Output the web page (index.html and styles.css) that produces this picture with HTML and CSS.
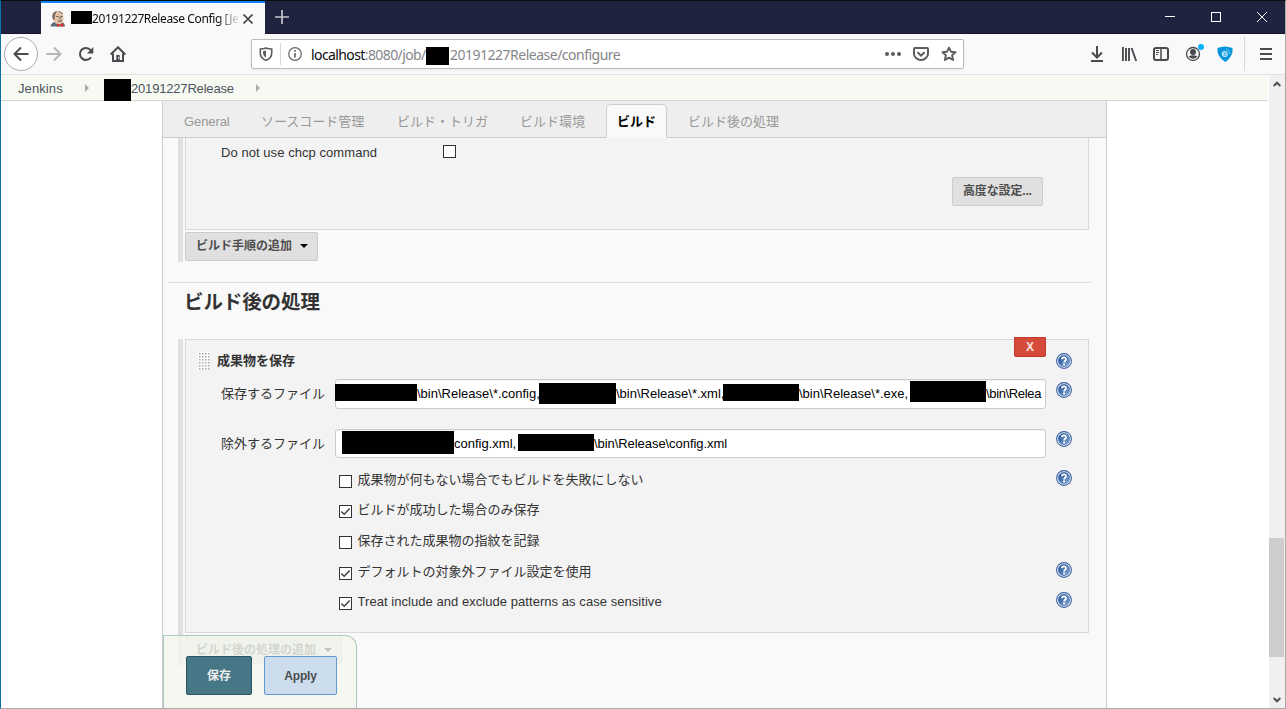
FILE: index.html
```html
<!DOCTYPE html>
<html lang="ja">
<head>
<meta charset="utf-8">
<title>20191227Release Config [Jenkins]</title>
<link rel="stylesheet" href="styles.css">
</head>
<body>
<svg class="defs" width="0" height="0">
  <defs>
    <linearGradient id="blue" x1="0" y1="0" x2="1" y2="1"><stop offset="0" stop-color="#174a91"/><stop offset="1" stop-color="#8badd8"/></linearGradient>
    <symbol id="help" viewBox="0 0 16 16">
      <circle cx="8" cy="8" r="7.400" fill="#fff" stroke="#365f9f" stroke-width="1.100"/>
      <circle cx="8" cy="8" r="5.700" fill="url(#blue)" stroke="#2f5c9e" stroke-width=".5"/>
      <path d="M5.900 6.200C6 4 10 3.800 10 6.200C10 7.800 8.100 7.600 8.100 9.400" fill="none" stroke="#fff" stroke-width="1.800"/>
      <rect x="7.100" y="10.500" width="2" height="1.900" fill="#fff"/>
    </symbol>
    <pattern id="dots" width="3" height="3" patternUnits="userSpaceOnUse"><rect width="3" height="3" fill="#fbfbfb"/><rect x="1" y="1" width="1.500" height="1.500" fill="#aaa"/></pattern>
  </defs>
</svg>
<div class="window">
  <header class="titlebar">
    <div class="tab">
      <svg class="favicon" width="16" height="18" viewBox="0 0 16 18">
        <path d="M.5 16.500C1 13 4 12 5 12L12 12C14 13 15 14.500 15 16.500Z" fill="#5b6b7c"/>
        <path d="M3 5C4 0 12 0 13 5L13.500 9C13 13 11 14.500 8.500 14.500C6 14.500 4 12 3.500 10Z" fill="#e3c3aa"/>
        <path d="M3.500 10C1 6 2.500 1.500 7.500 1Q4.500 3 4.700 9.500ZM7.500 1Q12 1 13.200 4.500L12 4Q10 1.800 7.500 1Z" fill="#75685f"/>
        <path d="M6.500 6.500h2M10.500 6.500h2M10 7v2.500M8 11q2 .7 4-.3" stroke="#5c4a42" fill="none"/>
        <path d="M7 13.500l3 1 3.500-1.500v4L10 15.700l-3 1.300Z" fill="#d33833"/>
      </svg>
      <span class="mask tab-mask"></span>
      <span class="tab-title">20191227Release Config [Je</span>
      <svg width="12" height="12" viewBox="0 0 12 12"><path d="M1.500 1.500l9 9M10.500 1.500l-9 9" stroke="#3e3e42" stroke-width="1.700"/></svg>
    </div>
    <svg class="plus" width="14" height="14" viewBox="0 0 14 14"><path d="M7 0v14M0 7h14" stroke="#c4c5cd" stroke-width="1.700"/></svg>
    <div class="win-buttons">
      <svg width="10" height="10" viewBox="0 0 10 10"><path d="M0 4.500h10" stroke="#fff"/></svg>
      <svg width="10" height="10" viewBox="0 0 10 10"><rect x=".5" y=".5" width="9" height="9" fill="none" stroke="#fff"/></svg>
      <svg width="10" height="10" viewBox="0 0 10 10"><path d="M0 0l10 10M10 0L0 10" stroke="#fff"/></svg>
    </div>
  </header>
  <nav class="toolbar">
    <div class="nav-left">
      <span class="back"><svg width="16" height="16" viewBox="0 0 16 16"><path d="M15.500 8H1.500M8 1.500L1.500 8L8 14.500" fill="none" stroke="#4a4a4f" stroke-width="2"/></svg></span>
      <svg width="16" height="16" viewBox="0 0 16 16"><path d="M.5 8H14.500M8 1.500L14.500 8L8 14.500" fill="none" stroke="#b5b5b7" stroke-width="2"/></svg>
      <svg width="16" height="16" viewBox="0 0 16 16"><path d="M13 11.200A6 6 0 1 1 12.500 4" fill="none" stroke="#4a4a4f" stroke-width="2"/><path d="M15.300 1v6.500H9Z" fill="#4a4a4f"/></svg>
      <svg width="16" height="16" viewBox="0 0 16 16"><path d="M.7 8.500L8 1.300l7.300 7.200M3 7.500V15h10V7.500" fill="none" stroke="#4a4a4f" stroke-width="2"/><path d="M6.300 9h3.400v6H6.300Z" fill="#4a4a4f"/><rect x="8" y="11" width="1" height="1.500" fill="#fff"/></svg>
    </div>
    <div class="urlbar">
      <svg width="14" height="14" viewBox="0 0 14 14"><path d="M7 1C5 1.800 3 2 1.300 2V6c0 3.800 2.500 6.200 5.700 7.200C10.200 12.200 12.700 9.800 12.700 6V2C11 2 9 1.800 7 1Z" fill="none" stroke="#5c5c60" stroke-width="1.600"/><path d="M7 3.500v7C5.300 9.700 4 8 4 5.800V4.200Z" fill="#5c5c60"/></svg>
      <i class="url-sep"></i>
      <svg class="info" width="14" height="14" viewBox="0 0 14 14"><circle cx="7" cy="7" r="6.300" fill="none" stroke="#68686c" stroke-width="1.200"/><path d="M7 6v4.500M7 3v1.700" stroke="#68686c" stroke-width="1.700"/></svg>
      <span class="url url-a"><b>localhost</b>:8080/job/</span><span class="mask url-mask"></span><span class="url url-b">20191227Release/configure</span>
      <div class="url-actions">
        <svg width="16" height="16" viewBox="0 0 16 16"><g fill="#5c5c60"><circle cx="2" cy="8" r="2"/><circle cx="8" cy="8" r="2"/><circle cx="14" cy="8" r="2"/></g></svg>
        <svg width="16" height="16" viewBox="0 0 16 16"><path d="M2 2h12a1 1 0 0 1 1 1v4.500a7 6.500 0 0 1-14 0V3a1 1 0 0 1 1-1Z" fill="none" stroke="#5c5c60" stroke-width="2"/><path d="M4.500 6.300L8 9.700l3.500-3.400" fill="none" stroke="#5c5c60" stroke-width="2"/></svg>
        <svg width="16" height="16" viewBox="0 0 16 16"><path d="M8 1.700l1.900 4 4.600.5-3.400 3.100 1 4.700L8 11.700 3.900 14l1-4.700L1.500 6.200l4.600-.5Z" fill="none" stroke="#5c5c60" stroke-width="1.900" stroke-linejoin="round"/></svg>
      </div>
    </div>
    <div class="nav-right">
      <svg width="16" height="16" viewBox="0 0 16 16"><path d="M8 0v11M3 6.500l5 5 5-5M2 15h12" fill="none" stroke="#4a4a4f" stroke-width="2"/></svg>
      <svg width="16" height="16" viewBox="0 0 16 16"><path d="M1.900 1v14M5 2v13M8 2v13M10.500 2l4.700 13" fill="none" stroke="#4a4a4f" stroke-width="1.900"/></svg>
      <svg width="16" height="16" viewBox="0 0 16 16"><rect x="1" y="2" width="14" height="12" rx="2" fill="none" stroke="#4a4a4f" stroke-width="2"/><path d="M8 2v12" stroke="#4a4a4f" stroke-width="1.500"/><path d="M3 4.500h3M3 6.500h3M3 8.500h2" stroke="#4a4a4f"/></svg>
      <svg class="account" width="20" height="22" viewBox="0 0 20 22"><circle cx="8" cy="12" r="6.500" fill="none" stroke="#4a4a4f" stroke-width="1.300"/><circle cx="8" cy="10" r="3" fill="#4a4a4f"/><path d="M3.500 14.500Q8 12 12.500 14.500Q8 19 3.500 14.500Z" fill="#4a4a4f"/><circle cx="16" cy="5" r="3" fill="#00b3f4"/></svg>
      <svg width="16" height="16" viewBox="0 0 16 16"><path d="M.5 2Q8-1 15.500 2V6Q14 12 8.500 16Q2 12 .5 6Z" fill="#0996dc"/><circle cx="7.800" cy="8" r="3" fill="#c9eaff"/><path d="M6.500 7h3M6.500 9h3" stroke="#0996dc"/><path d="M9 3q4 1 4 5" stroke="#70c7f2" fill="none"/></svg>
      <i class="menu-sep"></i>
      <svg width="14" height="16" viewBox="0 0 14 16"><path d="M1 3h12M1 8h12M1 13h12" stroke="#4a4a4f" stroke-width="1.800"/></svg>
    </div>
  </nav>
  <div class="viewport">
    <div class="page">
      <div class="breadcrumbs">
        <span class="crumb-a">Jenkins</span><i class="crumb-arrow"></i><span class="mask crumb-mask"></span><span class="crumb-b">20191227Release</span><i class="crumb-arrow"></i>
      </div>
      <main class="config">
        <div class="config-tabs">
          <span class="ctab general">General</span><span class="ctab scm">ソースコード管理</span><span class="ctab">ビルド・トリガ</span><span class="ctab">ビルド環境</span><span class="ctab active">ビルド</span><span class="ctab">ビルド後の処理</span>
        </div>
        <section class="group build">
          <div class="panel build-panel">
            <div class="chcp"><span class="chcp-label">Do not use chcp command</span><i class="check"></i></div>
            <span class="btn advanced">高度な設定...</span>
          </div>
          <span class="btn add">ビルド手順の追加<i class="caret"></i></span>
        </section>
        <h2 class="heading">ビルド後の処理</h2>
        <section class="group post">
          <div class="panel post-panel">
            <div class="row title-row">
              <svg class="handle" width="12" height="18"><rect width="12" height="18" fill="url(#dots)"/></svg>
              <b class="panel-title">成果物を保存</b>
              <span class="delete">X</span>
              <svg class="help" width="16" height="16"><use href="#help"/></svg>
            </div>
            <div class="row input-row">
              <span class="label">保存するファイル</span>
              <div class="input"><i class="mask m1"></i><span class="w1">\bin\Release\*.config,</span><i class="mask m2"></i><span class="w2">\bin\Release\*.xml,</span><i class="mask m3"></i><span class="w3">\bin\Release\*.exe,</span><i class="mask m4"></i><span class="w4">\bin\Relea</span></div>
              <svg class="help" width="16" height="16"><use href="#help"/></svg>
            </div>
            <div class="row input-row second">
              <span class="label">除外するファイル</span>
              <div class="input"><i class="mask m5"></i><span class="w5">config.xml,</span><i class="mask m6"></i><span class="w6">\bin\Release\config.xml</span></div>
              <svg class="help" width="16" height="16"><use href="#help"/></svg>
            </div>
            <div class="options">
              <div class="row option"><i class="check"></i><span>成果物が何もない場合でもビルドを失敗にしない</span><svg class="help" width="16" height="16"><use href="#help"/></svg></div>
              <div class="row option"><i class="check on"><svg width="11" height="11" viewBox="0 0 11 11"><path d="M1.300 5.500L4.200 8.300L9.700 2.500"/></svg></i><span>ビルドが成功した場合のみ保存</span></div>
              <div class="row option"><i class="check"></i><span>保存された成果物の指紋を記録</span></div>
              <div class="row option"><i class="check on"><svg width="11" height="11" viewBox="0 0 11 11"><path d="M1.300 5.500L4.200 8.300L9.700 2.500"/></svg></i><span>デフォルトの対象外ファイル設定を使用</span><svg class="help" width="16" height="16"><use href="#help"/></svg></div>
              <div class="row option"><i class="check on"><svg width="11" height="11" viewBox="0 0 11 11"><path d="M1.300 5.500L4.200 8.300L9.700 2.500"/></svg></i><span class="treat">Treat include and exclude patterns as case sensitive</span><svg class="help" width="16" height="16"><use href="#help"/></svg></div>
            </div>
          </div>
          <span class="btn add">ビルド後の処理の追加<i class="caret"></i></span>
        </section>
        <div class="savebar"><span class="save">保存</span><span class="apply">Apply</span></div>
      </main>
    </div>
    <div class="scrollbar">
      <svg width="8" height="6" viewBox="0 0 8 6"><path d="M.7 5L4 1.700L7.300 5" fill="none" stroke="#505050" stroke-width="2"/></svg>
      <i class="thumb"></i>
      <svg width="8" height="6" viewBox="0 0 8 6"><path d="M.7 1L4 4.300L7.300 1" fill="none" stroke="#505050" stroke-width="2"/></svg>
    </div>
  </div>
</div>
</body>
</html>
```
FILE: styles.css
```css
* { box-sizing: border-box; }
body { margin: 0; font: 13px/18px "Liberation Sans", "Noto Sans CJK JP", sans-serif; color: #333; overflow: hidden; }
svg { display: block; flex: none; }
i { font-style: normal; }
.defs { position: absolute; }
.mask { background: #000; flex: none; }
.window { width: 1286px; height: 709px; display: flex; flex-direction: column; border: 1px solid; border-color: #090a12 #aaa #aaa #0873a8; }

.titlebar { height: 33px; background: #20233f; display: flex; align-items: center; flex: none; border-bottom: 1px solid #15152d; }
.tab { width: 224px; height: 33px; align-self: flex-start; margin-left: 40px; background: #f9f9fa; border-top: 2px solid #0a84ff; display: flex; align-items: center; padding-left: 9px; font: 12px/16px "Noto Sans", sans-serif; color: #0c0c0d; }
.tab-mask { width: 21px; height: 13px; margin: 0 0 3px 5px; }
.tab-title { width: 147px; margin-right: 3px; padding-top: 1px; white-space: nowrap; overflow: hidden; letter-spacing: -.38px; -webkit-mask-image: linear-gradient(90deg, #000 125px, transparent 149px); mask-image: linear-gradient(90deg, #000 125px, transparent 149px); }
.plus { margin-left: 10px; }
.win-buttons { display: flex; gap: 36px; margin-left: auto; margin-right: 18px; }

.toolbar { height: 41px; flex: none; background: #f9f9fa; border-bottom: 1px solid #e0e0e0; display: flex; align-items: center; }
.nav-left { display: flex; align-items: center; gap: 16px; margin-left: 3px; width: 247px; }
.back { width: 34px; height: 34px; border: 1px solid #aaa; border-radius: 50%; background: #fff; display: grid; place-items: center; margin-right: -8px; }
.urlbar { width: 713px; height: 30px; border: 1px solid #bbb; border-radius: 2px; background: #fff; display: flex; align-items: center; padding-left: 7px; box-shadow: 0 1px 3px rgba(0,0,0,.06); }
.url-sep { width: 1px; height: 22px; background: #d7d7db; margin: 0 7px 0 7px; }
.info { margin-right: 9px; }
.url { font: 14px/18px "Noto Sans", sans-serif; color: #85858a; white-space: nowrap; flex: none; padding-top: 1px; }
.url b { font-weight: 400; color: #0c0c0d; }
.url-a { width: 115px; letter-spacing: -.6px; }
.url-mask { width: 23px; height: 18px; margin-top: 3px; }
.url-b { letter-spacing: -.5px; padding-left: 1px; }
.url-actions { display: flex; gap: 12px; margin-left: auto; margin-right: 6px; }
.nav-right { display: flex; align-items: center; margin-left: auto; margin-right: 12px; gap: 16px; }
.account { margin: -2px -4px 0 0; }
.menu-sep { width: 1px; height: 34px; background: #d7d7db; margin: 0 -2px 0 -5px; }

.viewport { flex: 1; min-height: 0; display: flex; }
.page { flex: 1; min-width: 0; display: flex; flex-direction: column; background: #fff; }
.breadcrumbs { height: 26px; flex: none; background: #f6faf2; border-bottom: 1px solid #d3d7cf; display: flex; align-items: center; padding-left: 17px; color: #4d545d; }
.crumb-a, .crumb-b { white-space: nowrap; flex: none; margin-top: 3px; }
.crumb-a { width: 67px; letter-spacing: .1px; }
.crumb-b { width: 125px; letter-spacing: -.18px; }
.crumb-arrow { border-left: 4px solid #aaa; border-top: 4px solid transparent; border-bottom: 4px solid transparent; margin-right: 15px; }
.crumb-mask { width: 27px; height: 22px; align-self: flex-end; margin-bottom: -1px; }

.config { position: relative; width: 945px; margin-left: 161px; flex: 1; min-height: 0; background: #f9f9f9; border: solid #ccc; border-width: 0 1px; overflow: hidden; }
.config-tabs { height: 37px; background: #eee; border-bottom: 1px solid #ccc; padding: 3px 10px 0; display: flex; gap: 10px; }
.ctab { height: 34px; padding: 0 10px; border: 1px solid transparent; line-height: 33px; color: #999; white-space: nowrap; flex: none; }
.general { width: 67px; letter-spacing: -.1px; }
.scm { width: 126px; }
.ctab.active { border-color: #ccc #ccc #f9f9f9; border-radius: 5px 5px 0 0; background: #f9f9f9; color: #000; font-weight: 700; }
.group { margin-left: 15px; width: 911px; border-left: 5px solid #e0e0e0; padding-left: 2px; }
.panel { border: 1px solid #d8d8d8; background: #f3f3f3; }
.build { height: 124px; }
.build-panel { height: 92px; border-top: 0; padding: 6px 45px 0 35px; display: flex; flex-direction: column; }
.chcp { display: flex; height: 18px; }
.chcp-label { width: 222px; letter-spacing: .06px; }
.check { width: 13px; height: 13px; border: 1px solid #333; background: #fff; flex: none; margin-top: 1px; }
.check path { fill: none; stroke: #404040; stroke-width: 1.5; }
.btn { display: flex; align-items: center; width: max-content; height: 29px; border: 1px solid #ccc; border-radius: 2px; background: #e0e0e0; color: #4d4d4d; font-weight: 700; font-size: 12px; padding: 0 10px 2px; white-space: nowrap; }
.advanced { align-self: flex-end; margin-top: 15px; width: 91px; letter-spacing: -.15px; }
.add { margin-top: 2px; }
.post .add { padding-bottom: 0; }
.caret { border: solid transparent; border-width: 4px 4px 0; border-top-color: #000; margin: 1px -1px 0 8px; }
.heading { margin: 20px 15px 0 5px; padding: 5px 0 0 16px; height: 57px; border-top: 1px solid #ddd; font-size: 19.5px; line-height: 28px; letter-spacing: -.1px; color: #333; }
.post { height: 327px; }
.post-panel { height: 294px; }
.row { display: flex; align-items: center; }
.help { margin-left: 10px; }
.title-row { height: 39px; padding: 0 16px 0 12px; }
.handle { margin-top: 2px; }
.panel-title { margin: 2px 0 0 7px; }
.delete { align-self: flex-start; margin: -3px 0 0 auto; width: 32px; height: 20px; border: 1px solid #c13a2b; border-radius: 0 0 2px 2px; background: #d54a3b; color: #f6e3df; font: 700 12px/18px "Liberation Sans", sans-serif; text-align: center; }
.title-row .help { margin-top: 3px; }
.input-row { height: 30px; padding-left: 35px; }
.input-row .help { margin-bottom: 8px; }
.second { margin-top: 20px; }
.label { width: 114px; white-space: nowrap; }
.input { width: 711px; height: 30px; border: 1px solid #ccc; border-radius: 3px; background: #fff; color: #000; display: flex; align-items: center; white-space: nowrap; box-shadow: inset 0 1px 1px rgba(0,0,0,.05); }
.input span { flex: none; }
.m1 { width: 82px; height: 17px; margin: 0 0 3px -1px; }
.m2 { width: 77px; height: 21px; margin-bottom: 1px; }
.m3 { width: 76px; height: 17px; margin-bottom: 3px; }
.m4 { width: 76px; height: 21px; margin-bottom: 5px; }
.m5 { width: 112px; height: 23px; margin: 0 0 3px 6px; }
.m6 { width: 76px; height: 17px; margin-bottom: 3px; }
.w1 { width: 122px; } .w2 { width: 107px; } .w3 { width: 111px; } .w5 { width: 64px; }
.w4 { letter-spacing: -.35px; }
.w6 { letter-spacing: -.06px; }
.second .input { height: 29px; margin-bottom: 1px; }
.second .help { margin-bottom: 10px; }
.options { padding: 6px 0 0 153px; }
.option { height: 30.6px; }
.option span { margin-left: 5.5px; margin-bottom: 1px; white-space: nowrap; }
.option .check { margin-top: 2px; }
.option .help { margin: 0 16px 4px auto; }
.option:last-child .help { margin-bottom: 5px; }
.option .treat { letter-spacing: .05px; }
.savebar { position: absolute; left: 0; bottom: 0; width: 194px; height: 73px; border: 1px solid #a9cbbb; border-bottom: 0; border-radius: 0 12px 0 0; background: rgba(244,248,239,.8); display: flex; gap: 12px; padding: 20px 0 0 22px; }
.save, .apply { height: 39px; border-radius: 2px; border: 1px solid #2f5366; background: #457786; color: #eee; font-size: 12px; font-weight: 700; line-height: 38px; text-align: center; }
.save { width: 66px; }
.apply { width: 73px; background: #ccdded; border-color: #6398d3; color: #4d4d4d; letter-spacing: -.2px; }
.scrollbar { width: 17px; flex: none; background: #f0f0f0; border-left: 1px solid #fff; display: flex; flex-direction: column; align-items: center; padding: 6px 1px 5px 0; }
.thumb { width: 15px; height: 119px; margin-top: auto; margin-bottom: 40px; background: #cdcdcd; }
```
